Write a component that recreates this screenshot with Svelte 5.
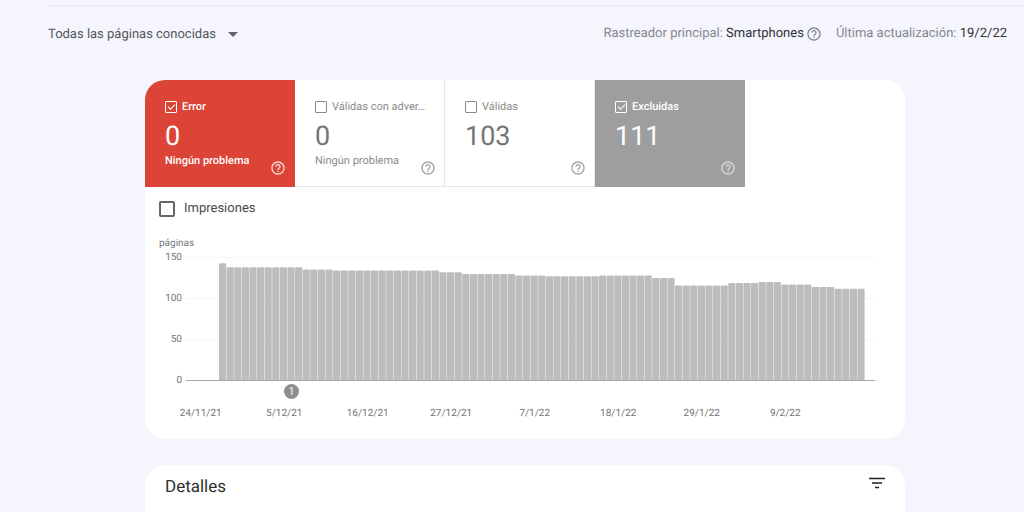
<script>
  let tiles = $state([
    { id: 'error', label: 'Error', count: 0, note: 'Ningún problema', checked: true },
    { id: 'warning', label: 'Válidas con adver…', count: 0, note: 'Ningún problema', checked: false },
    { id: 'valid', label: 'Válidas', count: 103, note: '', checked: false },
    { id: 'excluded', label: 'Excluidas', count: 111, note: '', checked: true }
  ]);

  // Runs of [number of days, excluded pages per day]
  const runs = [
    [1, 143], [10, 138], [4, 135.5], [14, 134], [3, 132], [7, 130], [4, 128], [7, 127],
    [7, 128], [3, 125], [7, 116], [4, 119], [3, 120], [4, 117], [3, 114], [4, 112]
  ];
  const days = runs.flatMap(([n, v]) => Array(n).fill(v));
  const step = 7.6;
  const start = 33;
  const scale = 123 / 150;

  const bar = (v, i) => {
    const x = start + i * step;
    const y = 123.5 - v * scale;
    return `M${x} 123.5V${y + 1}q0-1 1-1h${step - 2.4}q1 0 1 1V123.5z`;
  };

  const ticks = [150, 100, 50, 0];
  const dates = ['24/11/21', '5/12/21', '16/12/21', '27/12/21', '7/1/22', '18/1/22', '29/1/22', '9/2/22'];
</script>

{#snippet help()}
  <svg class="help-icon" viewBox="0 0 24 24" aria-hidden="true">
    <path fill="currentColor" d="M11 18h2v-2h-2v2zm1-16C6.480 2 2 6.480 2 12s4.480 10 10 10 10-4.480 10-10S17.520 2 12 2zm0 18c-4.410 0-8-3.590-8-8s3.590-8 8-8 8 3.590 8 8-3.590 8-8 8zm0-14c-2.210 0-4 1.790-4 4h2c0-1.100.9-2 2-2s2 .9 2 2c0 2-3 1.750-3 5h2c0-2.250 3-2.500 3-5 0-2.210-1.790-4-4-4z" />
  </svg>
{/snippet}

<div class="page">
  <header>
    <div class="picker">
      <select aria-label="Páginas">
        <option>Todas las páginas conocidas</option>
      </select>
      <svg class="arrow" viewBox="0 0 10 5" aria-hidden="true"><path d="M0 0h10L5 5z" fill="currentColor" /></svg>
    </div>
    <div class="meta">
      <div class="meta-item">
        <span>Rastreador principal: <b>Smartphones</b></span>
        <button class="help" aria-label="Ayuda">{@render help()}</button>
      </div>
      <span>Última actualización: <b>19/2/22</b></span>
    </div>
  </header>

  <main>
    <section class="card">
      <div class="tiles">
        {#each tiles as tile (tile.id)}
          <div class="tile {tile.id}">
            <label class="tile-label">
              <input type="checkbox" bind:checked={tile.checked} />
              <span>{tile.label}</span>
            </label>
            <div class="count">{tile.count}</div>
            <div class="tile-foot">
              <span>{tile.note}</span>
              <button class="help" aria-label="Ayuda">{@render help()}</button>
            </div>
          </div>
        {/each}
      </div>

      <label class="impressions">
        <input type="checkbox" />
        <span>Impresiones</span>
      </label>

      <div class="chart">
        <div class="axis-title">páginas</div>
        <div class="plot">
          <div class="ticks">
            {#each ticks as tick}<span>{tick}</span>{/each}
          </div>
          <svg class="bars" viewBox="0 0 689 124" preserveAspectRatio="none" role="img" aria-label="Páginas excluidas por día">
            <path d="M0 .5H689M0 41.500H689M0 82.500H689" stroke="#f5f5f5" />
            {#each days as v, i}
              <path d={bar(v, i)} fill="#bdbdbd" />
            {/each}
            <path d="M0 123.500H689" stroke="#a6a6a6" />
          </svg>
        </div>
        <div class="notes"><button class="marker">1</button></div>
        <div class="dates">
          {#each dates as date}<span>{date}</span>{/each}
        </div>
      </div>
    </section>

    <section class="card details">
      <h2>Detalles</h2>
      <button class="filter" aria-label="Filtrar">
        <svg viewBox="0 0 16 12" aria-hidden="true"><path d="M0 1.500h16M3 6h10M6 10.500h4" stroke="currentColor" stroke-width="1.6" /></svg>
      </button>
    </section>
  </main>
</div>

<style>
  :global(body) {
    margin: 0;
    background: #f4f5fd;
  }
  .page {
    box-sizing: border-box;
    height: 100vh;
    overflow: hidden;
    padding-top: 5px;
    font-family: Roboto, 'Liberation Sans', sans-serif;
    font-size: 13px;
    color: #3c4043;
    text-rendering: geometricPrecision;
  }
  header {
    display: flex;
    justify-content: space-between;
    margin-left: 48px;
    padding: 18px 17px 0 0;
    border-top: 2px solid #ebedf3;
  }
  button {
    padding: 0;
    border: 0;
    background: none;
    font: inherit;
    color: inherit;
    cursor: pointer;
  }
  .picker {
    display: flex;
    align-items: center;
    gap: 12px;
    height: 18px;
  }
  select {
    appearance: none;
    padding: 0;
    border: 0;
    background: none;
    font: inherit;
    color: #55575b;
    text-rendering: inherit;
  }
  .arrow {
    width: 10px;
    height: 5px;
    color: #5f6368;
  }
  .meta {
    display: flex;
    gap: 14px;
    height: 18px;
    line-height: 18px;
    color: #84878d;
  }
  .meta-item {
    display: flex;
    align-items: center;
    gap: 2px;
  }
  .meta b {
    font-weight: 400;
    color: #303236;
  }
  .help {
    display: flex;
  }
  .help-icon {
    width: 16px;
    height: 16px;
  }
  main {
    display: flex;
    flex-direction: column;
    gap: 26px;
    max-width: 760px;
    margin: 37px auto 0;
    padding-left: 26px;
  }
  .card {
    overflow: hidden;
    border-radius: 20px;
    background: #fff;
  }
  .tiles {
    display: grid;
    grid-template-columns: repeat(4, 150px);
  }
  .tile {
    box-sizing: border-box;
    padding: 18px 8px 10px 20px;
    border-right: 1px solid #e8e8e8;
    border-bottom: 1px solid #e8e8e8;
    font-size: 11px;
    color: #8b8b8b;
  }
  .tile.error {
    border-color: #db4437;
    background: #db4437;
    color: #fff;
  }
  .tile.excluded {
    border-color: #9e9e9e;
    background: #9e9e9e;
    color: #fff;
  }
  .error,
  .excluded {
    font-weight: 500;
  }
  .tile-label {
    display: flex;
    align-items: center;
    gap: 5px;
    line-height: 18px;
    white-space: nowrap;
  }
  input {
    appearance: none;
    flex: none;
    display: grid;
    place-items: center;
    box-sizing: border-box;
    width: 12px;
    height: 12px;
    margin: 0;
    border: 1px solid currentColor;
    border-radius: 1px;
    color: inherit;
  }
  input:checked::before {
    content: '';
    width: 6px;
    height: 3px;
    margin-bottom: 2px;
    border: solid currentColor;
    border-width: 0 0 1px 1px;
    transform: rotate(-45deg);
  }
  .count {
    margin-top: 4px;
    font-size: 27px;
    font-weight: 400;
    line-height: 32px;
    color: #757575;
  }
  .error .count,
  .excluded .count {
    color: #fff;
  }
  .tile-foot {
    display: flex;
    justify-content: space-between;
    height: 24px;
    line-height: 18px;
  }
  .tile-foot .help {
    align-self: flex-end;
    opacity: 0.8;
  }
  .excluded .help {
    opacity: 0.6;
  }
  .impressions {
    display: flex;
    align-items: center;
    gap: 9px;
    width: fit-content;
    margin: 13px 0 0 14px;
    line-height: 18px;
    color: #4a4a4a;
  }
  .impressions input {
    width: 16px;
    height: 16px;
    border: 2px solid #666;
    border-radius: 2px;
  }
  .chart {
    padding: 19px 30px 18px 14px;
    font-size: 10px;
    line-height: 14px;
    color: #757575;
  }
  .plot {
    display: flex;
    align-items: center;
    gap: 4px;
    margin-top: -2px;
  }
  .ticks {
    display: flex;
    flex-direction: column;
    justify-content: space-between;
    box-sizing: border-box;
    width: 23px;
    height: 139px;
    padding-top: 2px;
    text-align: right;
  }
  .bars {
    flex: 1;
    min-width: 0;
    height: 124px;
  }
  .notes {
    display: flex;
    padding-left: 125px;
    margin-top: -4px;
  }
  .marker {
    width: 15px;
    height: 15px;
    border-radius: 50%;
    background: #8e8e8e;
    color: #fff;
    font-size: 10px;
    line-height: 15px;
  }
  .dates {
    display: grid;
    grid-template-columns: repeat(8, 1fr);
    margin: 8px 48px 0 0;
    text-align: center;
  }
  .details {
    display: flex;
    align-items: flex-start;
    justify-content: space-between;
    height: 80px;
    padding: 12px 20px;
  }
  h2 {
    margin: 0;
    font-size: 17px;
    font-weight: 400;
    line-height: 20px;
    color: #303030;
  }
  .filter {
    display: flex;
    color: #222;
  }
  .filter svg {
    width: 16px;
    height: 12px;
  }
</style>
